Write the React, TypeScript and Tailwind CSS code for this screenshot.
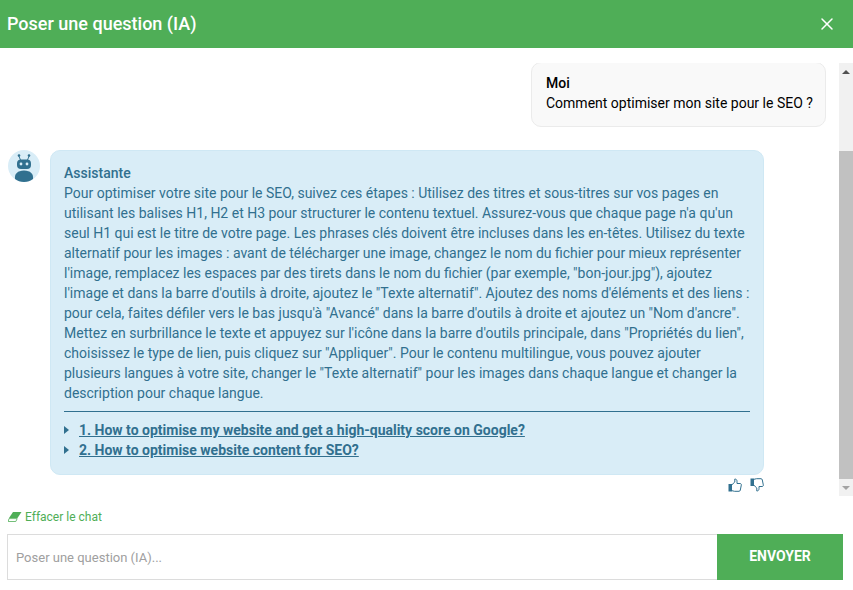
import { X } from 'lucide-react';

const answer = `Pour optimiser votre site pour le SEO, suivez ces étapes : Utilisez des titres et sous-titres sur vos pages en utilisant les balises H1, H2 et H3 pour structurer le contenu textuel. Assurez-vous que chaque page n'a qu'un seul H1 qui est le titre de votre page. Les phrases clés doivent être incluses dans les en-têtes. Utilisez du texte alternatif pour les images : avant de télécharger une image, changez le nom du fichier pour mieux représenter l'image, remplacez les espaces par des tirets dans le nom du fichier (par exemple, "bon-jour.jpg"), ajoutez l'image et dans la barre d'outils à droite, ajoutez le "Texte alternatif". Ajoutez des noms d'éléments et des liens : pour cela, faites défiler vers le bas jusqu'à "Avancé" dans la barre d'outils à droite et ajoutez un "Nom d'ancre". Mettez en surbrillance le texte et appuyez sur l'icône dans la barre d'outils principale, dans "Propriétés du lien", choisissez le type de lien, puis cliquez sur "Appliquer". Pour le contenu multilingue, vous pouvez ajouter plusieurs langues à votre site, changer le "Texte alternatif" pour les images dans chaque langue et changer la description pour chaque langue.`;

const links = [
  '1. How to optimise my website and get a high-quality score on Google?',
  '2. How to optimise website content for SEO?',
];

function BotAvatar() {
  return (
    <svg width="32" height="32" viewBox="0 0 32 32" className="shrink-0">
      <circle cx="16" cy="16" r="16" fill="#d9edf7" />
      <g fill="#31708f">
        <circle cx="11" cy="5.5" r="1.3" />
        <circle cx="21" cy="5.5" r="1.3" />
        <path d="M11.3 6l1.700 4h-1l-1.600-4zM20.700 6L19 10h1l1.600-4z" />
        <rect x="9" y="9.5" width="14" height="9.5" rx="4" />
        <path d="M7 29c-.7-5 2.500-8.500 9-8.500s9.700 3.500 9 8.500c-2.500 1.900-5.500 3-9 3s-6.500-1.100-9-3z" />
      </g>
      <circle cx="13" cy="14" r="1.4" fill="#d9edf7" />
      <circle cx="19" cy="14" r="1.4" fill="#d9edf7" />
    </svg>
  );
}

function EraserIcon() {
  return (
    <svg width="14" height="10" viewBox="0 0 14 10" className="shrink-0">
      <path d="M5 0h8.500L9.500 6H1z" fill="#4fae57" />
      <path d="M1 6.600h8.200L7.800 9.500H.2z" fill="none" stroke="#4fae57" strokeWidth="0.8" />
    </svg>
  );
}

function Thumb({ down }: { down?: boolean }) {
  return (
    <svg width="14" height="14" viewBox="0 0 14 14" className={down ? '-scale-y-100' : ''}>
      <rect x="0.500" y="6" width="3.500" height="7.500" fill="#31708f" />
      <path
        d="M4 6.700L6.800 4V1c1.500 0 2.200 1 2.200 2.300V5.500h3c1 0 1.500.7 1.300 1.600l-1 5c-.2.8-.6 1.200-1.300 1.200H6.500L4 12.700"
        fill="none"
        stroke="#31708f"
        strokeWidth="1"
      />
    </svg>
  );
}

function ScrollBar() {
  return (
    <div className="w-[14px] shrink-0 bg-[#f1f1f1] flex flex-col items-center">
      <div className="h-[17px] w-full flex items-center justify-center">
        <div className="w-0 h-0 border-x-[4px] border-x-transparent border-b-[4px] border-b-[#505050]" />
      </div>
      <div className="h-[71px] w-full" />
      <div className="h-[328px] w-full bg-[#c1c1c1]" />
      <div className="flex-1 w-full flex items-center justify-center">
        <div className="w-0 h-0 border-x-[4px] border-x-transparent border-t-[4px] border-t-[#a3a3a3]" />
      </div>
    </div>
  );
}

export default function App() {
  return (
    <div className="w-[853px] h-[590px] bg-white overflow-hidden flex flex-col font-['Roboto',sans-serif] text-[14px] leading-[20px]">
      <div className="h-[48px] shrink-0 bg-[#4fae57] flex items-center justify-between pl-[7px] pr-[16px] text-white">
        <h1 className="text-[18px] font-medium">Poser une question (IA)</h1>
        <X size={20} strokeWidth={1.8} className="-mt-[1px]" />
      </div>

      <div className="h-[433px] mt-[15px] shrink-0 flex overflow-hidden">
        <div className="flex-1 min-w-0">
          <div className="flex justify-end pr-[13px]">
            <div className="w-[295px] h-[65px] -mt-px bg-[#f9f9f9] border border-[#ebebeb] rounded-[10px] pl-[14px] pt-[10px] text-black whitespace-nowrap">
              <div className="font-medium">Moi</div>
              <div>Comment optimiser mon site pour le SEO ?</div>
            </div>
          </div>

          <div className="flex mt-[23px] pl-[8px] gap-[10px]">
            <BotAvatar />
            <div className="w-[714px]">
              <div className="bg-[#d9edf7] border border-[#cfe8f4] rounded-[10px] text-[#31708f] px-[13px] pt-[12px] h-[325px]">
                <div className="font-medium">Assistante</div>
                <p>{answer}</p>
                <div className="border-t border-[#31708f] mt-[8px] pt-[8px]">
                  {links.map((link) => (
                    <div key={link} className="flex items-center h-[20px]">
                      <div className="w-0 h-0 shrink-0 border-y-[4px] border-y-transparent border-l-[5px] border-l-[#31708f]" />
                      <a className="font-bold underline ml-[10px]">{link}</a>
                    </div>
                  ))}
                </div>
              </div>
              <div className="flex justify-end gap-[8px] pt-[3px]">
                <Thumb />
                <Thumb down />
              </div>
            </div>
          </div>
        </div>
        <ScrollBar />
      </div>

      <div className="pl-[8px] mt-[13px] flex items-center gap-[3px] text-[12px] leading-[16px] text-[#4fae57]">
        <EraserIcon />
        <span>Effacer le chat</span>
      </div>

      <div className="flex ml-[7px] mt-[9px] w-[836px] h-[46px]">
        <input
          placeholder="Poser une question (IA)..."
          className="flex-1 min-w-0 border border-[#dcdcdc] border-r-0 px-[8px] pt-[1px] text-[13px] outline-none placeholder:text-[#a0a0a0]"
        />
        <button className="w-[126px] shrink-0 bg-[#4fae57] text-white font-bold text-[14px] pb-[2px]">ENVOYER</button>
      </div>
    </div>
  );
}
